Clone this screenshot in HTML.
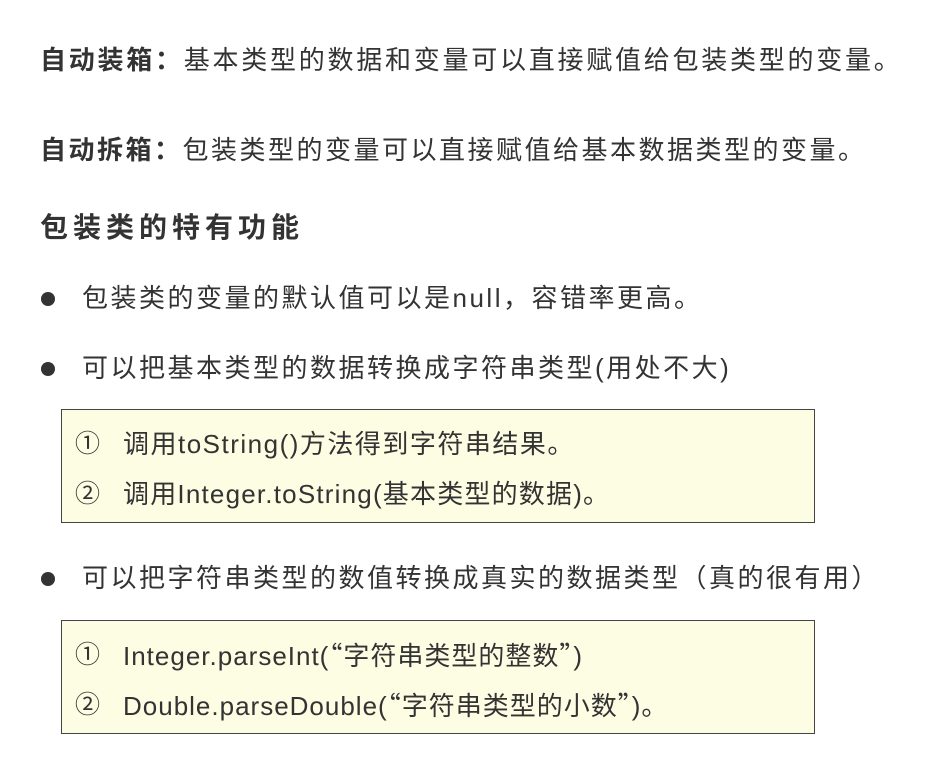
<!DOCTYPE html>
<html><head><meta charset="utf-8"><style>
body{margin:0;width:944px;height:762px;background:#fff;overflow:hidden;font-family:"Liberation Sans","Noto Sans CJK SC",sans-serif;color:#333;}
.t{position:absolute;white-space:nowrap;line-height:1;}
.l1{font-size:26px;letter-spacing:2.75px;}
.b{font-weight:bold;}
.dot{position:absolute;width:14px;height:14px;border-radius:50%;background:#333;}
.box{position:absolute;left:61px;width:752px;height:112px;border:1px solid #444;background:#fdfde4;}
.bx{font-size:26px;letter-spacing:1px;color:#333;}
.n{position:absolute;left:75px;font-size:25px;}
.q{font-family:"Noto Sans CJK SC",sans-serif;}
</style></head><body>
<div class="t l1" style="left:40px;top:47px"><span class="b">自动装箱：</span>基本类型的数据和变量可以直接赋值给包装类型的变量。</div>
<div class="t l1" style="left:40px;top:137px;letter-spacing:2.5px"><span class="b">自动拆箱：</span>包装类型的变量可以直接赋值给基本数据类型的变量。</div>
<div class="t b" style="left:40px;top:214px;font-size:28px;letter-spacing:5px">包装类的特有功能</div>
<div class="dot" style="left:41px;top:292px"></div>
<div class="t l1" style="left:82px;top:285px;letter-spacing:2.5px">包装类的变量的默认值可以是null，容错率更高。</div>
<div class="dot" style="left:41px;top:362px"></div>
<div class="t l1" style="left:82px;top:355px;letter-spacing:2.5px">可以把基本类型的数据转换成字符串类型(用处不大)</div>
<div class="box" style="top:409px"></div>
<div class="t n" style="top:432px">①</div>
<div class="t bx" style="left:123px;top:431px;letter-spacing:1.5px">调用toString()方法得到字符串结果。</div>
<div class="t n" style="top:482px">②</div>
<div class="t bx" style="left:123px;top:481px;letter-spacing:1.2px">调用Integer.toString(基本类型的数据)。</div>
<div class="dot" style="left:41px;top:572px"></div>
<div class="t l1" style="left:82px;top:565px;letter-spacing:2.5px">可以把字符串类型的数值转换成真实的数据类型（真的很有用）</div>
<div class="box" style="top:620px"></div>
<div class="t n" style="top:643px">①</div>
<div class="t bx" style="left:123px;top:642px">Integer.parseInt(<span class="q">“</span>字符串类型的整数<span class="q">”</span>)</div>
<div class="t n" style="top:693px">②</div>
<div class="t bx" style="left:123px;top:692px">Double.parseDouble(<span class="q">“</span>字符串类型的小数<span class="q">”</span>)。</div>
</body></html>
